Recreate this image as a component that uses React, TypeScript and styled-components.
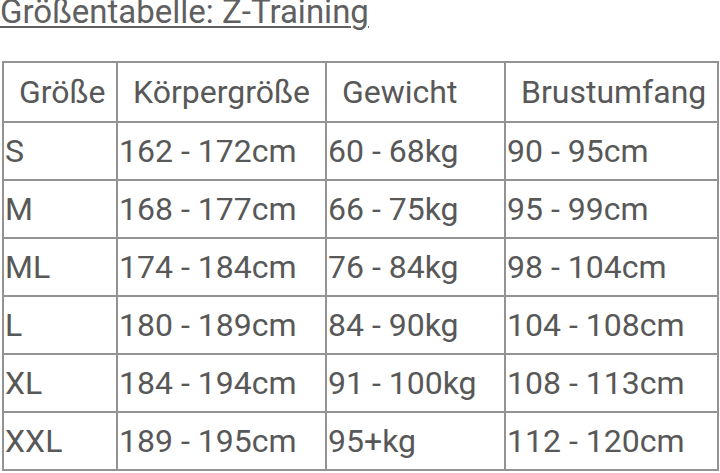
import React from 'react'
import styled, { createGlobalStyle } from 'styled-components'

const GlobalStyle = createGlobalStyle`
  html, body {
    margin: 0;
    padding: 0;
    background: #fff;
  }
  body {
    font-family: Roboto, 'Liberation Sans', sans-serif;
    color: #555;
  }
`

const rows: Array<[string, string, string, string]> = [
  ['S', '162 - 172cm', '60 - 68kg', '90 - 95cm'],
  ['M', '168 - 177cm', '66 - 75kg', '95 - 99cm'],
  ['ML', '174 - 184cm', '76 - 84kg', '98 - 104cm'],
  ['L', '180 - 189cm', '84 - 90kg', '104 - 108cm'],
  ['XL', '184 - 194cm', '91 - 100kg', '108 - 113cm'],
  ['XXL', '189 - 195cm', '95+kg', '112 - 120cm']
]

const headers = ['Größe', 'Körpergröße', 'Gewicht', 'Brustumfang']
const widths = [114, 209, 179, 213]

export default function App(): JSX.Element {
  return (
    <Page>
      <GlobalStyle />
      <Title>Größentabelle: Z-Training</Title>
      <Table>
        <colgroup>
          {widths.map((w, i) => (
            <col key={i} style={{ width: w }} />
          ))}
        </colgroup>
        <thead>
          <tr>
            {headers.map((h) => (
              <HeadCell key={h}>{h}</HeadCell>
            ))}
          </tr>
        </thead>
        <tbody>
          {rows.map((r) => (
            <tr key={r[0]}>
              {r.map((c, i) => (
                <Cell key={i}>{c}</Cell>
              ))}
            </tr>
          ))}
        </tbody>
      </Table>
    </Page>
  )
}

const Page = styled.div`
  width: 720px;
  height: 473px;
  overflow: hidden;
  padding: 0 2px;
  box-sizing: border-box;
`

const Title = styled.div`
  height: 61px;
  margin-left: -2px;
  font-size: 33px;
  line-height: 24px;
  color: #606060;
  text-decoration: underline;
  text-decoration-thickness: 2px;
  text-underline-offset: 3px;
`

const Table = styled.table`
  border-collapse: collapse;
  table-layout: fixed;
  width: 716px;
  border: 2px solid #474747;
  font-size: 32px;
  color: #585858;
`

const HeadCell = styled.th`
  height: 58px;
  padding: 0 0 0 15px;
  border: 2px solid #939393;
  font-weight: 400;
  text-align: left;
  white-space: nowrap;
  overflow: hidden;
`

const Cell = styled.td`
  height: 56px;
  padding: 0 0 0 1px;
  border: 2px solid #939393;
  white-space: nowrap;
  overflow: hidden;
`
